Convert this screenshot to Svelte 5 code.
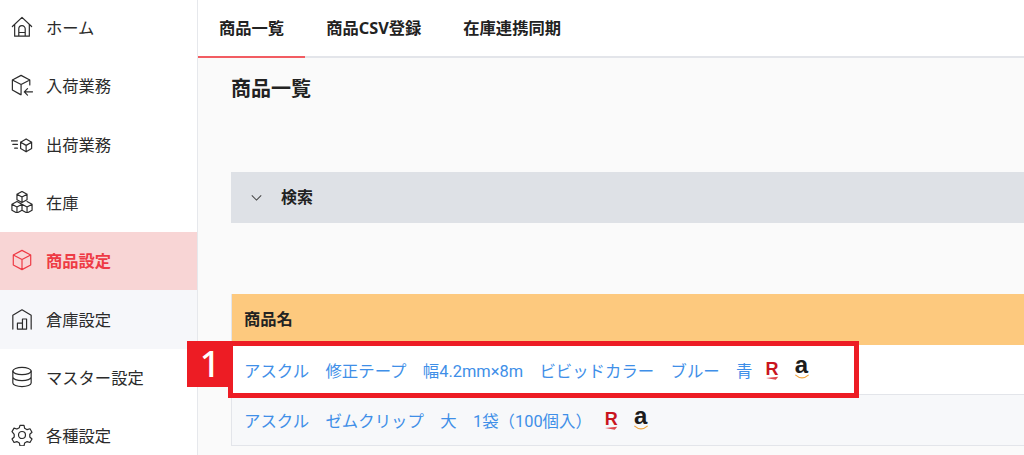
<script lang="ts">
	const navItems = [
		{ label: 'ホーム', icon: 'home' },
		{ label: '入荷業務', icon: 'inbound' },
		{ label: '出荷業務', icon: 'outbound' },
		{ label: '在庫', icon: 'stock' },
		{ label: '商品設定', icon: 'box', active: true },
		{ label: '倉庫設定', icon: 'warehouse', hover: true },
		{ label: 'マスター設定', icon: 'db' },
		{ label: '各種設定', icon: 'gear' }
	];
	const tabs = ['商品一覧', '商品CSV登録', '在庫連携同期'];
	const rows = [
		'アスクル　修正テープ　幅4.2mm×8m　ビビッドカラー　ブルー　青',
		'アスクル　ゼムクリップ　大　1袋（100個入）'
	];
</script>

{#snippet navIcon(name: string)}
	<svg class="nav-icon" viewBox="0 0 24 24" fill="none" stroke="currentColor" stroke-width="1.3" stroke-linejoin="round" stroke-linecap="round">
		{#if name === 'home'}
			<path d="M1.500 11.500 12 1.500l10.500 10M4 9.500V22h16V9.500M8.500 22v-8a3.500 3.500 0 0 1 7 0v8M8.500 18h7" />
		{:else if name === 'inbound'}
			<path d="M10.500 22.500 1.500 17.500V6.500L11 1.500l9.500 5V12M1.500 6.500l9.500 5 9.500-5M11 11.500v11M23.500 19.500h-9M18 16l-3.500 3.500L18 23" />
		{:else if name === 'outbound'}
			<path d="M16.500 6.500 22.500 10v7l-6 3.500-6-3.500v-7zM10.500 10l6 3.500 6-3.500M16.500 13.500v7M0 8.500h7M2 12.500h5M4 16.500h3" />
		{:else if name === 'stock'}
			<path d="M12 .5l5.500 3v6L12 12.500l-5.500-3v-6zM6.500 3.500l5.500 3 5.500-3M12 6.500v6M6.500 11.500l5.500 3v6.500l-5.500 3-5.500-3v-6.500zM1 14.500l5.500 3 5.500-3M6.500 17.500V24M17.500 11.500l5.500 3v6.500l-5.500 3-5.500-3M12 14.500l5.500 3 5.500-3M17.500 17.500V24" />
		{:else if name === 'box'}
			<path d="M12 1.500 21.500 6.500v11L12 22.500l-9.500-5v-11zM2.500 6.500l9.500 5 9.500-5M12 11.500v11" />
		{:else if name === 'warehouse'}
			<path d="M2 23V8L12 2l10 6v15M7 23v-6.500h5.500V23M12.500 16.500V12H17v11M7 23h10" />
		{:else if name === 'db'}
			<ellipse cx="12" cy="5.500" rx="10" ry="4" />
			<path d="M2 5.500v13c0 2.200 4.500 4 10 4s10-1.800 10-4v-13M2 12c0 2.200 4.500 4 10 4s10-1.800 10-4" />
		{:else}
			<circle cx="12" cy="12" r="3.800" />
			<path d="M9.800 1.500h4.400l.7 3.200 2.700 1.500 3.100-1 2.200 3.800-2.400 2.200v3l2.400 2.200-2.200 3.800-3.100-1-2.700 1.500-.7 3.200H9.800l-.7-3.200-2.700-1.500-3.100 1-2.200-3.800 2.400-2.200v-3L1.100 8.300l2.200-3.800 3.100 1 2.700-1.500z" />
		{/if}
	</svg>
{/snippet}

{#snippet logos()}
	<span class="logo rakuten">R<svg viewBox="0 0 16 4"><path d="M0 2 15 .5 12 4z" fill="#e0474c" /></svg></span>
	<span class="logo amazon">a<svg viewBox="0 0 18 6"><path d="M1 1c5 4.500 11 4.500 16 0" fill="none" stroke="#f0a33c" stroke-width="1.400" /></svg></span>
{/snippet}

<div class="page">
	<nav class="sidebar">
		{#each navItems as item}
			<div class="nav-item" class:active={item.active} class:hover={item.hover}>
				{@render navIcon(item.icon)}
				<span>{item.label}</span>
			</div>
		{/each}
	</nav>

	<main class="main">
		<div class="tabs">
			{#each tabs as tab, i}
				<div class="tab" class:current={i === 0}>{tab}</div>
			{/each}
		</div>

		<div class="content">
			<h1>商品一覧</h1>

			<div class="search">
				<svg class="chevron" viewBox="0 0 12 7" fill="none" stroke="#444" stroke-width="1.200"><path d="M.5.5 6 6l5.500-5.500" /></svg>
				<span>検索</span>
			</div>

			<div class="table">
				<div class="head">商品名</div>
				{#each rows as row, i}
					<div class="row" class:even={i === 1}>
						<span class="name">{row}</span>
						{@render logos()}
					</div>
				{/each}

				<div class="callout"></div>
				<div class="badge">1</div>
			</div>
		</div>
	</main>
</div>

<style>
	:global(body) {
		margin: 0;
		overflow: hidden;
		font-family: 'Noto Sans', 'Noto Sans CJK JP', sans-serif;
		background: #fff;
	}
	.page {
		display: flex;
		width: 1024px;
		height: 455px;
		overflow: hidden;
	}
	.sidebar {
		width: 197px;
		flex-shrink: 0;
		margin-top: -1px;
		border-right: 1px solid #e6e8ec;
		color: #2b2b2b;
	}
	.nav-item {
		display: flex;
		align-items: center;
		height: 58.300px;
		padding: 0 0 2px 11px;
		gap: 13px;
		font-size: 16.300px;
		box-sizing: border-box;
	}
	.nav-item.active {
		background: #f8d5d5;
		color: #ee3b45;
		font-weight: 700;
	}
	.nav-item.hover {
		background: #f6f7fa;
	}
	.nav-icon {
		width: 22px;
		height: 22px;
		flex-shrink: 0;
	}
	.main {
		flex: 1;
		min-width: 0;
		display: flex;
		flex-direction: column;
	}
	.tabs {
		display: flex;
		height: 58px;
		box-sizing: border-box;
		border-bottom: 2px solid #e3e5ea;
		background: #fff;
	}
	.tab {
		height: 58px;
		box-sizing: border-box;
		padding: 0 21px;
		line-height: 56px;
		font-size: 16.300px;
		font-weight: 700;
		color: #222;
	}
	.tab.current {
		border-bottom: 2px solid #f25c62;
	}
	.content {
		flex: 1;
		background: #fafafa;
		padding: 0 0 0 33px;
	}
	h1 {
		margin: 0;
		padding-top: 16px;
		height: 114px;
		box-sizing: border-box;
		font-size: 20px;
		line-height: 30px;
		font-weight: 700;
		color: #222;
	}
	.search {
		display: flex;
		align-items: center;
		height: 51px;
		background: #dee1e6;
		padding-left: 20px;
		gap: 19px;
		font-size: 16px;
		line-height: 22px;
		font-weight: 700;
		color: #222;
	}
	.search span {
		margin-top: -2px;
	}
	.chevron {
		width: 11px;
		height: 6px;
	}
	.table {
		position: relative;
		margin-top: 71px;
		border-left: 1px solid #e3e5ea;
	}
	.head {
		height: 51px;
		line-height: 50px;
		padding-left: 12px;
		background: #fdc97e;
		font-size: 16.300px;
		font-weight: 700;
		color: #222;
	}
	.row {
		display: flex;
		align-items: center;
		height: 50px;
		padding-left: 12px;
		font-family: Roboto, 'Noto Sans CJK JP', sans-serif;
		font-size: 16.400px;
		color: #3f8fe8;
		background: #fff;
		border-bottom: 1px solid #e3e5ea;
		box-sizing: border-box;
	}
	.row.even {
		height: 51px;
		background: #f7f8fa;
	}
	.logo {
		display: inline-flex;
		flex-direction: column;
		align-items: center;
		font-family: 'Liberation Sans', sans-serif;
		font-weight: 700;
		line-height: 1;
	}
	.logo svg {
		display: block;
	}
	.rakuten {
		margin-left: 13px;
		width: 13px;
		font-size: 18px;
		color: #c9151e;
	}
	.rakuten svg {
		width: 13px;
		height: 4px;
		margin-top: -2px;
	}
	.amazon {
		margin-left: 15px;
		width: 16px;
		font-size: 24px;
		color: #1c1c1c;
		margin-top: -7px;
	}
	.amazon svg {
		width: 16px;
		height: 5px;
		margin-top: -3px;
	}
	.callout {
		position: absolute;
		left: -4px;
		top: 47px;
		width: 631px;
		height: 57px;
		box-sizing: border-box;
		border: 5px solid #ed1c24;
		pointer-events: none;
	}
	.badge {
		position: absolute;
		left: -45px;
		top: 47px;
		width: 46px;
		height: 46px;
		background: #ed1c24;
		color: #fff;
		font-size: 36px;
		font-weight: 500;
		line-height: 46px;
		text-align: center;
	}
</style>
